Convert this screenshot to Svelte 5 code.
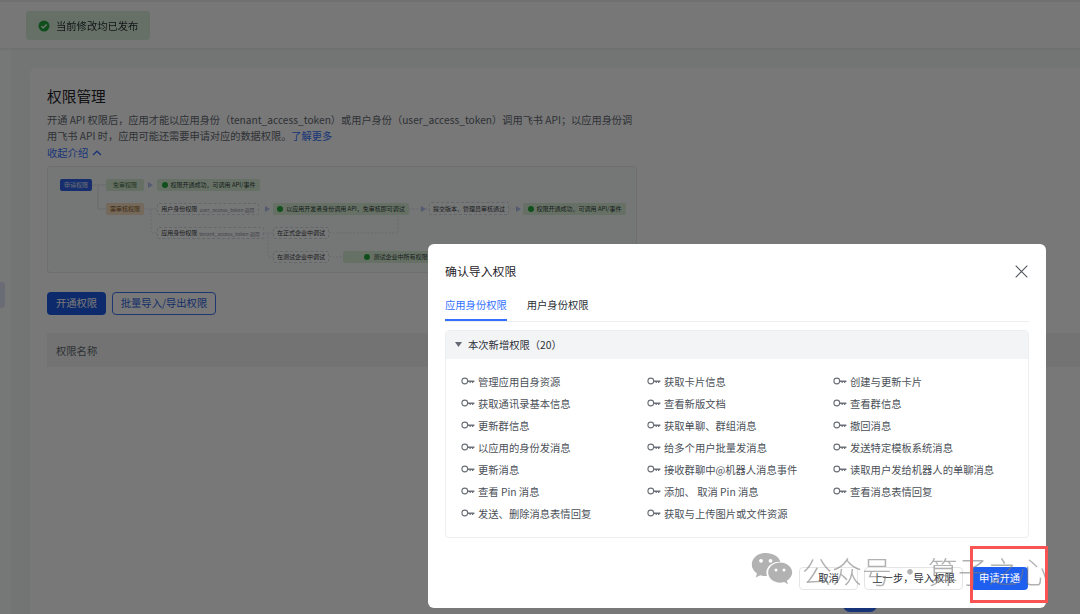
<script>
  const nodes = [
    { x: 12, y: 12, w: 32, h: 12, kind: "primary", text: "申请权限" },
    { x: 58, y: 12, w: 38, h: 12, kind: "free", text: "免审权限" },
    { x: 109, y: 12, w: 103, h: 12, kind: "ok", text: "权限开通成功，可调用 API/事件", check: true },
    { x: 58, y: 36, w: 38, h: 12, kind: "audit", text: "需审核权限" },
    { x: 109, y: 36, w: 102, h: 12, kind: "plain", text: "用户身份权限", sub: "user_access_token 调用" },
    { x: 225, y: 36, w: 136, h: 12, kind: "ok", text: "以应用开发者身份调用 API，免审核即可调试", check: true },
    { x: 381, y: 35, w: 80, h: 13, kind: "plain", text: "提交版本，管理员审核通过" },
    { x: 475, y: 36, w: 103, h: 12, kind: "ok", text: "权限开通成功，可调用 API/事件", check: true },
    { x: 109, y: 60, w: 107, h: 12, kind: "plain", text: "应用身份权限", sub: "tenant_access_token 调用" },
    { x: 225, y: 60, w: 56, h: 12, kind: "plain", text: "在正式企业中调试" },
    { x: 225, y: 84, w: 56, h: 12, kind: "plain", text: "在测试企业中调试" },
    { x: 295, y: 84, w: 130, h: 12, kind: "ok", text: "测试企业中所有权限免审调试", check: true },
  ];

  const arrows = [
    { x: 100, y: 15 },
    { x: 217, y: 39 },
    { x: 373, y: 39 },
    { x: 468, y: 39 },
  ];

  const permissions = [
    "管理应用自身资源", "获取卡片信息", "创建与更新卡片",
    "获取通讯录基本信息", "查看新版文档", "查看群信息",
    "更新群信息", "获取单聊、群组消息", "撤回消息",
    "以应用的身份发消息", "给多个用户批量发消息", "发送特定模板系统消息",
    "更新消息", "接收群聊中@机器人消息事件", "读取用户发给机器人的单聊消息",
    "查看 Pin 消息", "添加、 取消 Pin 消息", "查看消息表情回复",
    "发送、删除消息表情回复", "获取与上传图片或文件资源",
  ];
</script>

<div class="page">
  <header class="topbar">
    <div class="status">
      <svg width="12" height="12" viewBox="0 0 12 12">
        <circle cx="6" cy="6" r="5.5" fill="#22a83c" />
        <path d="M3.4 6.2 5.2 7.9 8.6 4.5" fill="none" stroke="#fff" stroke-width="1.3" />
      </svg>
      <span>当前修改均已发布</span>
    </div>
  </header>

  <div class="body">
    <aside class="sidebar"><div class="side-active"></div></aside>
    <div class="gutter"></div>
    <main class="card">
      <h2>权限管理</h2>
      <p class="intro">
        开通 API 权限后，应用才能以应用身份（tenant_access_token）或用户身份（user_access_token）调用飞书 API；以应用身份调用飞书 API 时，应用可能还需要申请对应的数据权限。<span class="link">了解更多</span>
      </p>
      <div class="collapse">
        <span>收起介绍</span>
        <svg width="10" height="6" viewBox="0 0 10 6"><path d="M1 5 5 1.2 9 5" fill="none" stroke="currentColor" stroke-width="1.3" /></svg>
      </div>

      <div class="diagram">
        <svg class="wires" width="590" height="107">
          <g fill="none" stroke="#d3d9e2" stroke-width="0.7">
            <path d="M44 18H58M50 18V42H58" />
            <path d="M96 42H109M103 42V66H109" stroke-dasharray="2 1.5" />
            <path d="M216 66H225M220 66V90H225" stroke-dasharray="2 1.5" />
            <path d="M281 66H350V42M281 90H295" stroke-dasharray="2 1.5" />
            <path d="M361 42H373M378 42H381M461 42H468" stroke-dasharray="2 1.5" />
          </g>
        </svg>
        {#each arrows as a}
          <svg class="arrow" style="left: {a.x}px; top: {a.y}px" width="5" height="6" viewBox="0 0 5 6"><path d="M0 0 5 3 0 6Z" fill="#b4c2ec" /></svg>
        {/each}
        {#each nodes as n}
          <div class="node {n.kind}" style="left: {n.x}px; top: {n.y}px; width: {n.w}px; height: {n.h}px">
            {#if n.check}<i class="dot"></i>{/if}
            <span>{n.text}</span>
            {#if n.sub}<small>{n.sub}</small>{/if}
          </div>
        {/each}
      </div>

      <div class="actions">
        <button class="btn-solid">开通权限</button>
        <button class="btn-outline">批量导入/导出权限</button>
      </div>

      <div class="table-head">权限名称</div>
      <div class="pager-dot"></div>
    </main>
  </div>
</div>

<div class="mask"></div>

<section class="modal">
  <div class="modal-head">
    <h3>确认导入权限</h3>
    <svg class="close" width="13" height="13" viewBox="0 0 13 13"><path d="M.7.7 12.3 12.3M12.3.7.7 12.3" stroke="#51565d" stroke-width="1.1" fill="none" /></svg>
  </div>

  <nav class="tabs">
    <span class="tab active">应用身份权限</span>
    <span class="tab">用户身份权限</span>
  </nav>

  <div class="panel">
    <div class="panel-head">
      <svg width="7" height="5" viewBox="0 0 7 5"><path d="M0 0H7L3.5 5Z" fill="#646a73" /></svg>
      <span>本次新增权限（20）</span>
    </div>
    <ul class="perm-grid">
      {#each permissions as name}
        <li>
          <svg width="14" height="8" viewBox="0 0 14 8">
            <circle cx="3.8" cy="4" r="2.9" fill="none" stroke="#6b7078" stroke-width="1.1" />
            <path d="M6.8 3.5H13.4V5H12.3V6H11V5H9.8V6H8.6V5H6.8Z" fill="#6b7078" />
          </svg>
          <span>{name}</span>
        </li>
      {/each}
    </ul>
  </div>

  <footer class="modal-foot">
    <button class="btn-ghost cancel">取消</button>
    <button class="btn-ghost prev">上一步，导入权限</button>
    <button class="btn-apply">申请开通</button>
  </footer>
</section>

<div class="watermark">
  <svg width="42" height="36" viewBox="0 0 42 36">
    <path d="M14.5 1C6.8 1 .8 6.200 .8 12.600c0 3.700 2 6.900 5.200 9l-1.300 4 4.600-2.400c1.600.5 3.300.8 5.200.8.500 0 1 0 1.400-.1-.3-1-.5-2-.5-3.100 0-6.200 5.800-11.100 13-11.100h1C28.200 4.700 22 1 14.500 1Z" fill="#b2b2b2" />
    <path d="M41.200 20.600c0-5.600-5.500-10.100-12-10.100-6.700 0-12 4.500-12 10.100s5.300 10.100 12 10.100c1.400 0 2.800-.2 4-.6l3.700 2.100-1-3.400c3.200-2 5.300-5 5.300-8.200Z" fill="#b2b2b2" />
    <circle cx="10" cy="8.800" r="1.900" fill="#fff" /><circle cx="19.500" cy="8.800" r="1.900" fill="#fff" />
    <circle cx="25" cy="18" r="1.500" fill="#fff" /><circle cx="33" cy="18" r="1.500" fill="#fff" />
  </svg>
  <span>公众号<b>·</b>算子之心</span>
</div>

<div class="callout"></div>

<style>
  :global(body) {
    margin: 0;
    background: #fff;
    font-family: "Noto Sans CJK SC", "Liberation Sans", sans-serif;
    overflow: hidden;
  }

  .page {
    width: 1080px;
    height: 614px;
    overflow: hidden;
    display: flex;
    flex-direction: column;
    filter: blur(0.35px);
  }

  .topbar {
    height: 48px;
    flex: none;
    box-sizing: border-box;
    background: #fdfdfd;
    border-top: 2px solid #eceeef;
    box-shadow: 0 1px 2px #e4e7e6;
    padding: 9px 0 0 26px;
    position: relative;
  }

  .status {
    display: inline-flex;
    align-items: center;
    gap: 6px;
    width: 124px;
    height: 29px;
    box-sizing: border-box;
    padding-left: 12px;
    border-radius: 3px;
    background: #d8efd9;
    color: #2b2f36;
    font-size: 10.3px;
  }

  .body {
    flex: 1;
    display: flex;
    min-height: 0;
    background: #f4f7f6;
  }

  .sidebar {
    width: 11px;
    flex: none;
    background: #fbfcfc;
    padding-top: 234px;
  }

  .side-active {
    width: 5px;
    height: 26px;
    border-radius: 0 3px 3px 0;
    background: #dfe6f8;
  }

  .gutter {
    width: 19px;
    flex: none;
  }

  .card {
    flex: 1;
    position: relative;
    margin-top: 20px;
    padding: 17px 0 0 17px;
    background: #fff;
    border-radius: 6px 0 0 0;
    min-width: 0;
  }

  h2 {
    margin: 0;
    font-size: 14.7px;
    line-height: 22px;
    font-weight: 400;
    color: #1f2329;
  }

  .intro {
    width: 590px;
    margin: 5px 0 0;
    font-size: 10.2px;
    line-height: 16px;
    color: #646a73;
  }

  .link,
  .collapse {
    color: #3370ff;
  }

  .collapse {
    display: flex;
    align-items: center;
    gap: 4px;
    font-size: 10.3px;
    line-height: 16px;
    margin-top: 1px;
  }

  .diagram {
    position: relative;
    width: 590px;
    height: 107px;
    box-sizing: border-box;
    margin-top: 5px;
    background: #f8fafb;
    border: 1px solid #e6eaec;
    border-radius: 3px;
  }

  .wires {
    position: absolute;
    left: 0;
    top: 0;
  }

  .arrow {
    position: absolute;
  }

  .node {
    position: absolute;
    box-sizing: border-box;
    display: flex;
    align-items: center;
    justify-content: center;
    gap: 2px;
    border-radius: 2px;
    font-size: 6px;
    line-height: 1;
    white-space: nowrap;
    overflow: hidden;
    color: #3a3f47;
  }

  .node small {
    font-size: 5px;
    color: #8f959e;
  }

  .primary {
    background: #2f62e8;
    color: #e4ebfd;
  }

  .free {
    background: #d6ecd4;
    color: #3d6b3e;
  }

  .audit {
    background: #f6dfc0;
    color: #8a5a1f;
  }

  .ok {
    background: #d9efd7;
    color: #30423a;
  }

  .plain {
    background: #fbfcfd;
    border: 0.7px dashed #d5dae2;
  }

  .dot {
    width: 6px;
    height: 6px;
    flex: none;
    margin-right: 1px;
    border-radius: 50%;
    background: #22a83c;
  }

  .actions {
    display: flex;
    gap: 6px;
    margin-top: 19px;
  }

  button {
    font-family: inherit;
    padding: 0;
    box-sizing: border-box;
    border-radius: 4px;
    font-size: 10.3px;
    line-height: 1;
  }

  .btn-solid {
    width: 59px;
    height: 23px;
    border: none;
    background: #1c59e6;
    color: #fff;
  }

  .btn-outline {
    width: 104px;
    height: 23px;
    border: 1px solid #3f74ee;
    background: #fff;
    color: #2f62e0;
  }

  .table-head {
    height: 34px;
    margin-top: 18px;
    padding-left: 9px;
    display: flex;
    align-items: center;
    background: #f2f5f3;
    color: #646a73;
    font-size: 10.3px;
  }

  .pager-dot {
    position: absolute;
    left: 813px;
    top: 530px;
    width: 34px;
    height: 14px;
    border-radius: 7px;
    background: #3370ff;
  }

  .mask {
    position: fixed;
    inset: 0;
    background: rgba(0, 0, 0, 0.53);
  }

  .modal {
    position: fixed;
    left: 428px;
    top: 244px;
    width: 618px;
    height: 364px;
    box-sizing: border-box;
    padding: 0 17px;
    background: #fff;
    border-radius: 6px;
    display: flex;
    flex-direction: column;
  }

  .modal-head {
    height: 54px;
    flex: none;
    display: flex;
    align-items: center;
    justify-content: space-between;
  }

  h3 {
    margin: -2px 0 0;
    font-size: 11.9px;
    font-weight: 400;
    color: #1f2329;
  }

  .close {
    margin-right: 1px;
  }

  .tabs {
    display: flex;
    gap: 20px;
    border-bottom: 1px solid #eceef0;
    height: 23px;
    flex: none;
  }

  .tab {
    font-size: 10.3px;
    line-height: 14px;
    color: #2b2f36;
    height: 23px;
    box-sizing: border-box;
    white-space: nowrap;
  }

  .tab.active {
    color: #3370ff;
    border-bottom: 2px solid #3370ff;
  }

  .panel {
    margin-top: 8px;
    height: 208px;
    flex: none;
    box-sizing: border-box;
    border: 1px solid #eceef0;
    border-radius: 4px;
    overflow: hidden;
  }

  .panel-head {
    height: 28px;
    display: flex;
    align-items: center;
    gap: 6px;
    padding-left: 9px;
    padding-bottom: 2px;
    box-sizing: border-box;
    background: #f3f4f6;
    font-size: 10.3px;
    color: #2b2f36;
  }

  .perm-grid {
    list-style: none;
    margin: 0;
    padding: 11px 0 0 15px;
    display: grid;
    grid-template-columns: repeat(3, 186px);
    grid-auto-rows: 22px;
  }

  .perm-grid li {
    display: flex;
    align-items: center;
    gap: 3px;
    font-size: 10.3px;
    color: #4b5058;
    white-space: nowrap;
  }

  .modal-foot {
    display: flex;
    justify-content: flex-end;
    gap: 6px;
    margin-top: 29px;
    padding-right: 1px;
  }

  .btn-ghost {
    height: 23px;
    border: 1px solid #e3e5e8;
    background: #fff;
    color: #2b2f36;
  }

  .cancel {
    width: 59px;
  }

  .prev {
    width: 99px;
    margin-right: 2px;
  }

  .btn-apply {
    width: 57px;
    height: 23px;
    border: none;
    background: #1f5ff0;
    color: #fff;
  }

  .watermark {
    position: fixed;
    left: 751px;
    top: 551px;
    display: flex;
    align-items: center;
    gap: 9px;
    pointer-events: none;
  }

  .watermark span {
    font-size: 30px;
    line-height: 38px;
    font-weight: 300;
    white-space: nowrap;
    color: rgba(120, 120, 120, 0.58);
  }

  .watermark b {
    font-weight: 300;
    padding: 0 3px;
  }

  .callout {
    position: fixed;
    left: 970px;
    top: 546px;
    width: 78px;
    height: 57px;
    box-sizing: border-box;
    border: 3px solid #f95454;
    pointer-events: none;
  }
</style>
